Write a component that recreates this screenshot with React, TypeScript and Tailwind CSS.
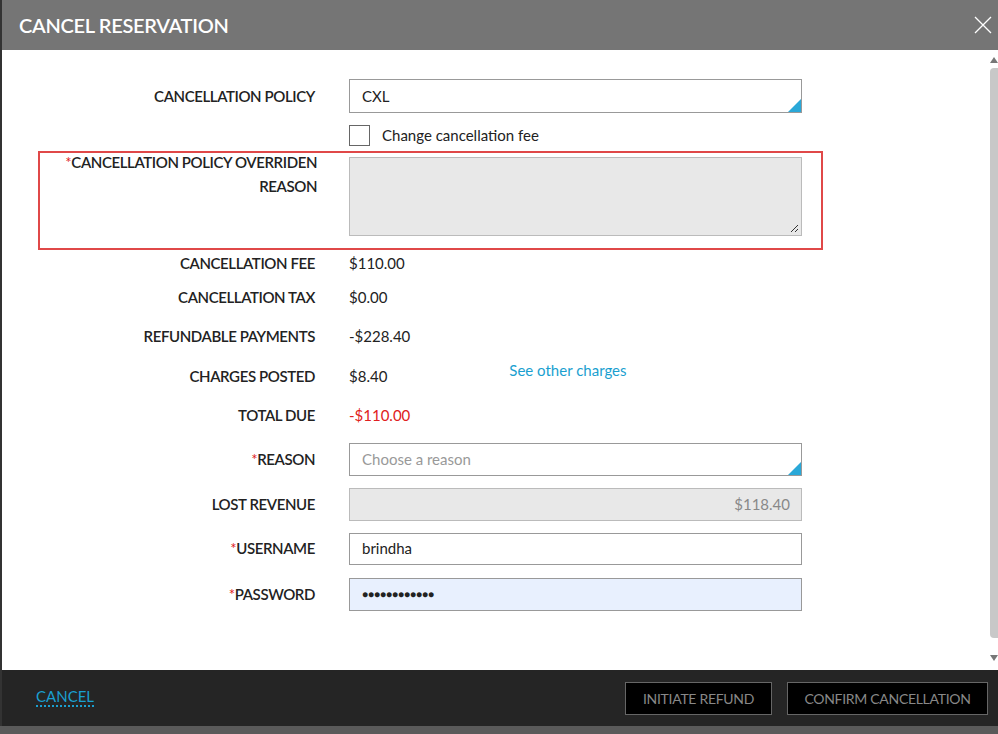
import React from "react";

const Row = ({ label, req, top, h, children }: { label: string; req?: boolean; top: string; h: string; children?: React.ReactNode }) => (
  <div className={`flex ${top}`}>
    <div className={`w-[313px] shrink-0 text-right text-[15px] font-semibold tracking-[-0.4px] text-[#222] flex items-center justify-end ${h}`}>
      {req && <span className="text-[#e02020] font-normal">*</span>}
      {label}
    </div>
    <div className={`ml-[34px] flex items-center ${h}`}>{children}</div>
  </div>
);

const Corner = () => (
  <div className="absolute right-0 bottom-0 w-0 h-0 border-l-[13px] border-l-transparent border-b-[13px] border-b-[#2aa8d8]" />
);

export default function App() {
  return (
    <div className="w-[998px] h-[734px] bg-[#5a5a5a] relative overflow-hidden" style={{ fontFamily: "Lato, 'Open Sans', sans-serif" }}>
      <div className="absolute left-0 top-0 w-[998px] h-[726px] flex flex-col border-l-2 border-[#333]">
        <div className="h-[50px] bg-[#757575] flex items-center justify-between pl-[17px] pr-[6px] shrink-0">
          <span className="text-white text-[20px] font-semibold tracking-[-0.3px]">CANCEL RESERVATION</span>
          <svg width="18" height="18" viewBox="0 0 18 18"><path d="M1 1L17 17M17 1L1 17" stroke="#fff" strokeWidth="1.3" /></svg>
        </div>
        <div className="flex-1 bg-white relative">
          <div className="absolute right-0 top-0 bottom-0 w-[10px] bg-white">
            <div className="absolute top-[7px] left-[2px] w-0 h-0 border-l-[4px] border-r-[4px] border-b-[6px] border-transparent border-b-[#777]" />
            <div className="absolute top-[18px] left-[2px] w-[8px] h-[570px] bg-[#c8c8c8] rounded-l" />
            <div className="absolute bottom-[9px] left-[2px] w-0 h-0 border-l-[4px] border-r-[4px] border-t-[6px] border-transparent border-t-[#777]" />
          </div>
          <Row label="CANCELLATION POLICY" top="mt-[29px]" h="h-[34px]">
            <div className="relative w-[453px] h-[34px] border border-[#999] flex items-center pl-[12px] text-[15px] text-[#222]">CXL<Corner /></div>
          </Row>
          <div className="ml-[347px] mt-[11px] flex items-center">
            <div className="w-[21px] h-[21px] border border-[#666] bg-white" />
            <span className="ml-[12px] text-[15px] text-[#222]">Change cancellation fee</span>
          </div>
          <div className="ml-[36px] mt-[4px] w-[785px] h-[99px] border-2 border-[#e04848] flex">
            <div className="w-[277px] text-right text-[15px] font-semibold tracking-[-0.4px] text-[#222] leading-[24px] -mt-[3px]">
              <span className="text-[#e02020] font-normal">*</span>CANCELLATION POLICY OVERRIDEN REASON
            </div>
            <div className="ml-[32px] mt-[4px] relative w-[453px] h-[79px] bg-[#e8e8e8] border border-[#bbb]">
              <svg className="absolute right-[2px] bottom-[2px]" width="10" height="10" viewBox="0 0 10 10"><path d="M9 2L2 9M9 6L6 9" stroke="#333" strokeWidth="1" /></svg>
            </div>
          </div>
          <Row label="CANCELLATION FEE" top="mt-[2px]" h="h-[24px]"><span className="text-[15px] text-[#222]">$110.00</span></Row>
          <Row label="CANCELLATION TAX" top="mt-[10px]" h="h-[24px]"><span className="text-[15px] text-[#222]">$0.00</span></Row>
          <Row label="REFUNDABLE PAYMENTS" top="mt-[15px]" h="h-[24px]"><span className="text-[15px] text-[#222]">-$228.40</span></Row>
          <Row label="CHARGES POSTED" top="mt-[16px]" h="h-[24px]">
            <span className="text-[15px] text-[#222]">$8.40</span>
            <span className="ml-[122px] -mt-[12px] text-[15px] text-[#1a9fd0]">See other charges</span>
          </Row>
          <Row label="TOTAL DUE" top="mt-[15px]" h="h-[24px]"><span className="text-[15px] text-[#e02020]">-$110.00</span></Row>
          <Row label="REASON" req top="mt-[15px]" h="h-[33px]">
            <div className="relative w-[453px] h-[33px] border border-[#999] flex items-center pl-[12px] text-[15px] text-[#999]">Choose a reason<Corner /></div>
          </Row>
          <Row label="LOST REVENUE" top="mt-[12px]" h="h-[33px]">
            <div className="w-[453px] h-[33px] border border-[#bbb] bg-[#e8e8e8] flex items-center justify-end pr-[11px] text-[15px] text-[#888]">$118.40</div>
          </Row>
          <Row label="USERNAME" req top="mt-[12px]" h="h-[32px]">
            <div className="w-[453px] h-[32px] border border-[#999] flex items-center pl-[12px] text-[15px] text-[#222]">brindha</div>
          </Row>
          <Row label="PASSWORD" req top="mt-[13px]" h="h-[33px]">
            <div className="w-[453px] h-[33px] border border-[#999] bg-[#e8f0fe] flex items-center pl-[12px] text-[10px] text-[#222] tracking-[0px]">●●●●●●●●●●●●</div>
          </Row>
        </div>
        <div className="h-[56px] bg-[#252525] shrink-0 flex items-center pl-[34px] pr-[10px]">
          <span className="text-[15px] text-[#1a9fd0] border-b-2 border-dotted border-[#1a9fd0] leading-[18px] mt-[-2px]">CANCEL</span>
          <div className="flex-1" />
          <div className="h-[33px] w-[147px] bg-black border border-[#666] flex items-center justify-center text-[14px] text-[#888] tracking-[-0.3px]">INITIATE REFUND</div>
          <div className="ml-[15px] h-[33px] w-[201px] bg-black border border-[#666] flex items-center justify-center text-[14px] text-[#888] tracking-[-0.3px]">CONFIRM CANCELLATION</div>
        </div>
      </div>
    </div>
  );
}
